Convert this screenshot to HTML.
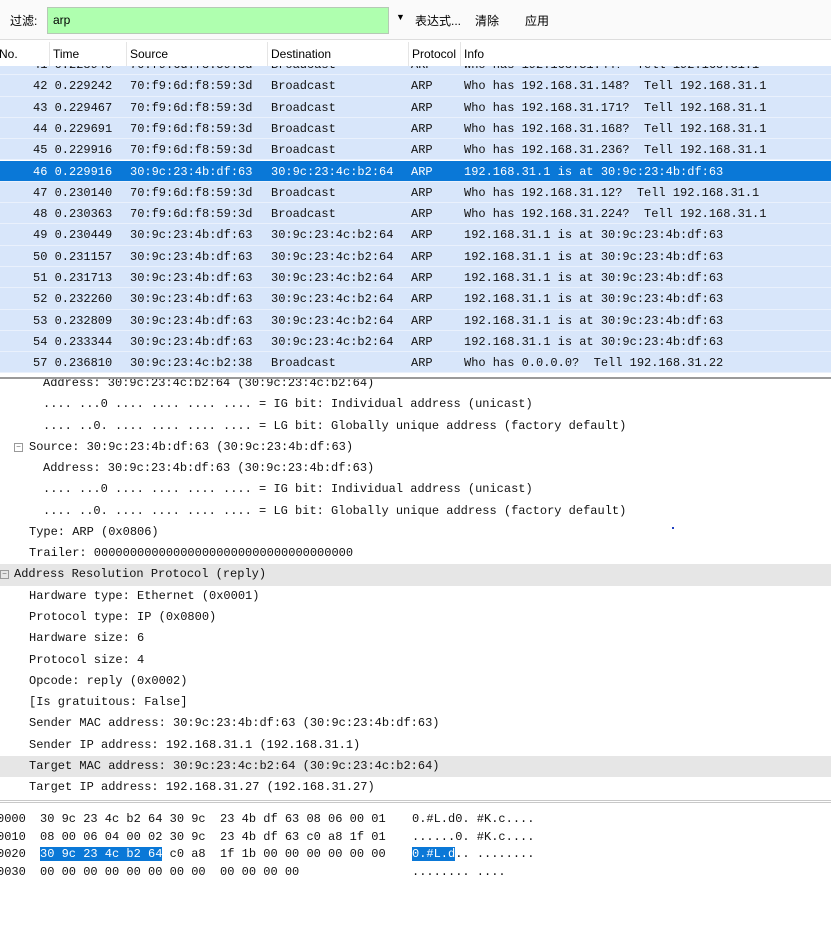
<!DOCTYPE html>
<html><head><meta charset="utf-8">
<style>
*{margin:0;padding:0;box-sizing:border-box}
body{width:831px;height:927px;background:#fff;position:relative;overflow:hidden;font-family:"Liberation Mono",monospace;font-size:12px;color:#111}
.ui{font-family:"Liberation Sans","Noto Sans CJK SC",sans-serif;font-size:12px;color:#000}
.abs{position:absolute;white-space:pre}
#tb{position:absolute;left:0;top:0;width:831px;height:40px;background:#fafafa;border-bottom:1px solid #ddd}
#flt{position:absolute;left:47px;top:7px;width:342px;height:27px;background:#afffaf;border:1px solid #b5c9b5}
#hdr{position:absolute;left:0;top:42px;width:831px;height:24px;background:#fff}
.hc{position:absolute;top:0;height:24px;line-height:24px;border-left:1px solid #e5e5e5;padding-left:3px}
#list{position:absolute;left:0;top:66px;width:831px;height:309px;overflow:hidden;background:#fff}
.r{position:absolute;left:0;width:831px;height:21.3px;line-height:21.3px;background:#d8e6fa;border-bottom:1px solid #eaf1fc;white-space:pre}
.r span{position:absolute;top:1px}
.sel{background:#0a78d7;color:#fff}
#det{position:absolute;left:0;top:377px;width:831px;height:423px;border-top:2px solid #9a9a9a;overflow:hidden}
#dw{position:absolute;left:0;top:9.5px;width:831px;height:420px}
.d{position:absolute;left:0;width:831px;height:21.28px;line-height:21.28px;white-space:pre}
.g{background:#e6e6e6}
.bx{display:inline-block;width:9px;height:9px;border:1px solid #999;position:absolute;top:6px;font-size:8px;line-height:7px;text-align:center;color:#666}
#hex{position:absolute;left:0;top:800px;width:831px;height:127px;border-top:3px double #c8c8c8}
.h{position:absolute;height:17.6px;line-height:17.6px;white-space:pre}
.hl{background:#0a78d7;color:#fff}
</style></head><body>
<div id="tb">
<div class="abs ui" style="left:10px;top:12px">过滤:</div>
<div id="flt"><div class="abs ui" style="left:5px;top:5px">arp</div></div>
<div class="abs ui" style="left:396px;top:12px;font-size:9px">▼</div>
<div class="abs ui" style="left:415px;top:12px">表达式...</div>
<div class="abs ui" style="left:475px;top:12px">清除</div>
<div class="abs ui" style="left:525px;top:12px">应用</div>
</div>
<div id="hdr" class="ui">
<div class="hc" style="left:-4px;border:none">No.</div>
<div class="hc" style="left:49px">Time</div>
<div class="hc" style="left:126px">Source</div>
<div class="hc" style="left:267px">Destination</div>
<div class="hc" style="left:408px">Protocol</div>
<div class="hc" style="left:460px">Info</div>
</div>
<div id="list">
<div class="r" style="top:-12px"><span style="left:33px">41 0.228940</span><span style="left:130px">70:f9:6d:f8:59:3d</span><span style="left:271px">Broadcast</span><span style="left:411px">ARP</span><span style="left:464px">Who has 192.168.31.44?  Tell 192.168.31.1</span></div>
<div class="r" style="top:9.3px"><span style="left:33px">42 0.229242</span><span style="left:130px">70:f9:6d:f8:59:3d</span><span style="left:271px">Broadcast</span><span style="left:411px">ARP</span><span style="left:464px">Who has 192.168.31.148?  Tell 192.168.31.1</span></div>
<div class="r" style="top:30.6px"><span style="left:33px">43 0.229467</span><span style="left:130px">70:f9:6d:f8:59:3d</span><span style="left:271px">Broadcast</span><span style="left:411px">ARP</span><span style="left:464px">Who has 192.168.31.171?  Tell 192.168.31.1</span></div>
<div class="r" style="top:51.9px"><span style="left:33px">44 0.229691</span><span style="left:130px">70:f9:6d:f8:59:3d</span><span style="left:271px">Broadcast</span><span style="left:411px">ARP</span><span style="left:464px">Who has 192.168.31.168?  Tell 192.168.31.1</span></div>
<div class="r" style="top:73.2px"><span style="left:33px">45 0.229916</span><span style="left:130px">70:f9:6d:f8:59:3d</span><span style="left:271px">Broadcast</span><span style="left:411px">ARP</span><span style="left:464px">Who has 192.168.31.236?  Tell 192.168.31.1</span></div>
<div class="r sel" style="top:94.5px"><span style="left:33px">46 0.229916</span><span style="left:130px">30:9c:23:4b:df:63</span><span style="left:271px">30:9c:23:4c:b2:64</span><span style="left:411px">ARP</span><span style="left:464px">192.168.31.1 is at 30:9c:23:4b:df:63</span></div>
<div class="r" style="top:115.8px"><span style="left:33px">47 0.230140</span><span style="left:130px">70:f9:6d:f8:59:3d</span><span style="left:271px">Broadcast</span><span style="left:411px">ARP</span><span style="left:464px">Who has 192.168.31.12?  Tell 192.168.31.1</span></div>
<div class="r" style="top:137.1px"><span style="left:33px">48 0.230363</span><span style="left:130px">70:f9:6d:f8:59:3d</span><span style="left:271px">Broadcast</span><span style="left:411px">ARP</span><span style="left:464px">Who has 192.168.31.224?  Tell 192.168.31.1</span></div>
<div class="r" style="top:158.4px"><span style="left:33px">49 0.230449</span><span style="left:130px">30:9c:23:4b:df:63</span><span style="left:271px">30:9c:23:4c:b2:64</span><span style="left:411px">ARP</span><span style="left:464px">192.168.31.1 is at 30:9c:23:4b:df:63</span></div>
<div class="r" style="top:179.7px"><span style="left:33px">50 0.231157</span><span style="left:130px">30:9c:23:4b:df:63</span><span style="left:271px">30:9c:23:4c:b2:64</span><span style="left:411px">ARP</span><span style="left:464px">192.168.31.1 is at 30:9c:23:4b:df:63</span></div>
<div class="r" style="top:201px"><span style="left:33px">51 0.231713</span><span style="left:130px">30:9c:23:4b:df:63</span><span style="left:271px">30:9c:23:4c:b2:64</span><span style="left:411px">ARP</span><span style="left:464px">192.168.31.1 is at 30:9c:23:4b:df:63</span></div>
<div class="r" style="top:222.3px"><span style="left:33px">52 0.232260</span><span style="left:130px">30:9c:23:4b:df:63</span><span style="left:271px">30:9c:23:4c:b2:64</span><span style="left:411px">ARP</span><span style="left:464px">192.168.31.1 is at 30:9c:23:4b:df:63</span></div>
<div class="r" style="top:243.6px"><span style="left:33px">53 0.232809</span><span style="left:130px">30:9c:23:4b:df:63</span><span style="left:271px">30:9c:23:4c:b2:64</span><span style="left:411px">ARP</span><span style="left:464px">192.168.31.1 is at 30:9c:23:4b:df:63</span></div>
<div class="r" style="top:264.9px"><span style="left:33px">54 0.233344</span><span style="left:130px">30:9c:23:4b:df:63</span><span style="left:271px">30:9c:23:4c:b2:64</span><span style="left:411px">ARP</span><span style="left:464px">192.168.31.1 is at 30:9c:23:4b:df:63</span></div>
<div class="r" style="top:286.2px"><span style="left:33px">57 0.236810</span><span style="left:130px">30:9c:23:4c:b2:38</span><span style="left:271px">Broadcast</span><span style="left:411px">ARP</span><span style="left:464px">Who has 0.0.0.0?  Tell 192.168.31.22</span></div>
</div>
<div id="det"><div id="dw">
<div class="d" style="top:-15.6px;left:43px">Address: 30:9c:23:4c:b2:64 (30:9c:23:4c:b2:64)</div>
<div class="d" style="top:5.7px;left:43px">.... ...0 .... .... .... .... = IG bit: Individual address (unicast)</div>
<div class="d" style="top:27px;left:43px">.... ..0. .... .... .... .... = LG bit: Globally unique address (factory default)</div>
<div class="d" style="top:48.2px"><span class="bx" style="left:14px">−</span><span style="position:absolute;left:29px">Source: 30:9c:23:4b:df:63 (30:9c:23:4b:df:63)</span></div>
<div class="d" style="top:69.5px;left:43px">Address: 30:9c:23:4b:df:63 (30:9c:23:4b:df:63)</div>
<div class="d" style="top:90.8px;left:43px">.... ...0 .... .... .... .... = IG bit: Individual address (unicast)</div>
<div class="d" style="top:112px;left:43px">.... ..0. .... .... .... .... = LG bit: Globally unique address (factory default)</div>
<div class="d" style="top:133.4px;left:29px">Type: ARP (0x0806)</div>
<div class="d" style="top:154.6px;left:29px">Trailer: 000000000000000000000000000000000000</div>
<div class="d g" style="top:175.9px"><span class="bx" style="left:0px">−</span><span style="position:absolute;left:14px">Address Resolution Protocol (reply)</span></div>
<div class="d" style="top:197.2px;left:29px">Hardware type: Ethernet (0x0001)</div>
<div class="d" style="top:218.5px;left:29px">Protocol type: IP (0x0800)</div>
<div class="d" style="top:239.8px;left:29px">Hardware size: 6</div>
<div class="d" style="top:261px;left:29px">Protocol size: 4</div>
<div class="d" style="top:282.4px;left:29px">Opcode: reply (0x0002)</div>
<div class="d" style="top:303.6px;left:29px">[Is gratuitous: False]</div>
<div class="d" style="top:324.9px;left:29px">Sender MAC address: 30:9c:23:4b:df:63 (30:9c:23:4b:df:63)</div>
<div class="d" style="top:346.2px;left:29px">Sender IP address: 192.168.31.1 (192.168.31.1)</div>
<div class="d g" style="top:367.5px"><span style="position:absolute;left:29px">Target MAC address: 30:9c:23:4c:b2:64 (30:9c:23:4c:b2:64)</span></div>
<div class="d" style="top:388.8px;left:29px">Target IP address: 192.168.31.27 (192.168.31.27)</div>
<div style="position:absolute;left:672px;top:138px;width:2px;height:2px;background:#2040c0"></div>
</div></div>
<div id="hex">
<div class="h" style="left:-3px;top:8px">0000</div><div class="h" style="left:40px;top:8px">30 9c 23 4c b2 64 30 9c  23 4b df 63 08 06 00 01</div><div class="h" style="left:412px;top:8px">0.#L.d0. #K.c....</div>
<div class="h" style="left:-3px;top:26px">0010</div><div class="h" style="left:40px;top:26px">08 00 06 04 00 02 30 9c  23 4b df 63 c0 a8 1f 01</div><div class="h" style="left:412px;top:26px">......0. #K.c....</div>
<div class="h" style="left:-3px;top:43px">0020</div><div class="h" style="left:40px;top:43px"><span class="hl">30 9c 23 4c b2 64</span> c0 a8  1f 1b 00 00 00 00 00 00</div><div class="h" style="left:412px;top:43px"><span class="hl">0.#L.d</span>.. ........</div>
<div class="h" style="left:-3px;top:61px">0030</div><div class="h" style="left:40px;top:61px">00 00 00 00 00 00 00 00  00 00 00 00</div><div class="h" style="left:412px;top:61px">........ ....</div>
</div>
</body></html>
